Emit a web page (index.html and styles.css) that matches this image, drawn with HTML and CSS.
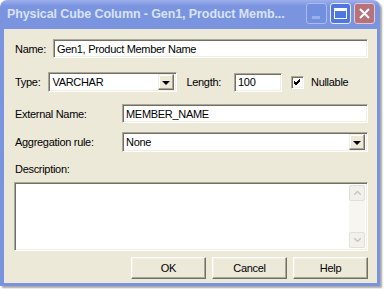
FILE: index.html
```html
<!DOCTYPE html>
<html lang="en">
<head>
    <meta charset="UTF-8">
    <title>Physical Cube Column</title>
    <link rel="stylesheet" href="styles.css">
</head>
<body>

    <!-- Dialog window -->
    <div class="window">
        <div class="titlebar">
            <span class="title">Physical Cube Column - Gen1, Product Memb...</span>
            <div class="caption-btns">
                <div class="cap-btn min"><span class="min-bar"></span></div>
                <div class="cap-btn max"><span class="max-box"></span></div>
                <div class="cap-btn close">
                    <svg width="13" height="13" viewBox="0 0 13 13">
                        <path d="M2 2 L11 11 M11 2 L2 11" stroke="#fff" stroke-width="2"/>
                    </svg>
                </div>
            </div>
        </div>

        <div class="client">
            <div class="row row-name">
                <label class="lbl">Name:</label>
                <div class="field name-field">Gen1, Product Member Name</div>
            </div>

            <div class="row row-type">
                <label class="lbl">Type:</label>
                <div class="field combo type-combo">
                    <span>VARCHAR</span>
                    <div class="drop-btn"><span class="arrow"></span></div>
                </div>
                <label class="lbl length-lbl">Length:</label>
                <div class="field length-field">100</div>
                <div class="check">
                    <svg width="7" height="7" viewBox="0 0 7 7">
                        <path d="M0 2 L2 4 L6 0 M0 3 L2 5 L6 1 M0 4 L2 6 L6 2" stroke="#000" stroke-width="1" fill="none"/>
                    </svg>
                </div>
                <label class="lbl">Nullable</label>
            </div>

            <div class="row row-ext">
                <label class="lbl wide-lbl">External Name:</label>
                <div class="field grow">MEMBER_NAME</div>
            </div>

            <div class="row row-agg">
                <label class="lbl wide-lbl">Aggregation rule:</label>
                <div class="field combo grow">
                    <span>None</span>
                    <div class="drop-btn"><span class="arrow"></span></div>
                </div>
            </div>

            <div class="desc-lbl">Description:</div>
            <div class="field memo">
                <div class="scrollbar">
                    <div class="sb-btn">
                        <svg width="7" height="4" viewBox="0 0 7 4"><path d="M0 4 L3.5 0.5 L7 4" stroke="#c9c7ba" stroke-width="1.4" fill="none"/></svg>
                    </div>
                    <div class="sb-track"></div>
                    <div class="sb-btn">
                        <svg width="7" height="4" viewBox="0 0 7 4"><path d="M0 0 L3.5 3.5 L7 0" stroke="#c9c7ba" stroke-width="1.4" fill="none"/></svg>
                    </div>
                </div>
            </div>

            <div class="buttons">
                <button class="btn">OK</button>
                <button class="btn">Cancel</button>
                <button class="btn">Help</button>
            </div>
        </div>
    </div>

</body>
</html>
```

FILE: styles.css
```css
* {
    margin: 0;
    padding: 0;
    box-sizing: border-box;
}

body {
    background: #ffffff;
    width: 384px;
    height: 289px;
    overflow: hidden;
    font-family: "Liberation Sans", Arial, sans-serif;
    font-size: 11px;
    letter-spacing: -0.3px;
    color: #000;
}

/* Window frame */
.window {
    width: 380px;
    height: 286px;
    background: linear-gradient(#9db0ec, #7b94e0 6px, #7a93df);
    border-radius: 7px 7px 0 0;
    box-shadow: 2px 2px 2px rgba(0, 0, 0, 0.35);
    display: flex;
    flex-direction: column;
}

.titlebar {
    height: 29px;
    display: flex;
    align-items: center;
    justify-content: space-between;
    padding: 0 5px 2px 7px;
}

.title {
    font-weight: bold;
    font-size: 12.5px;
    letter-spacing: -0.1px;
    color: #d8e2f8;
}

.caption-btns {
    display: flex;
    gap: 3px;
}

.cap-btn {
    width: 21px;
    height: 21px;
    border: 1px solid #b9c7f1;
    border-radius: 3px;
    background: #6b87dc;
    display: flex;
    align-items: center;
    justify-content: center;
}

.cap-btn.min {
    background: #7390e0;
    border-color: #a9bbef;
    align-items: flex-end;
    justify-content: flex-start;
    padding: 0 0 4px 5px;
}

.cap-btn.max {
    background: #4e78e0;
    border-color: #e8eefc;
}

.cap-btn.close {
    background: #b6737c;
    border-color: #e4c8d0;
}

.min-bar {
    width: 8px;
    height: 3px;
    background: #9aaee8;
}

.max-box {
    width: 13px;
    height: 11px;
    border: 1px solid #fff;
    border-top-width: 3px;
}

/* Client area */
.client {
    flex: 1;
    margin: 0 3px 3px 4px;
    background: #ece9d8;
    padding: 10px 9px 0 10px;
    display: flex;
    flex-direction: column;
}

.row {
    display: flex;
    align-items: center;
}

.row-name { height: 19px; }
.row-type { height: 20px; margin-top: 14px; }
.row-ext { height: 19px; margin-top: 12px; }
.row-agg { height: 20px; margin-top: 9px; }

.lbl {
    padding-left: 1px;
}

.name-field {
    margin-left: 7px;
    flex: 1;
    height: 19px;
}

.field {
    background: #fff;
    border: 1px solid;
    border-color: #aca899 #fff #fff #aca899;
    box-shadow: inset 1px 1px #716f64, inset -1px -1px #f1efe2;
    padding: 0 3px;
    display: flex;
    align-items: center;
    height: 100%;
}

.grow {
    flex: 1;
}

.wide-lbl {
    width: 108px;
}

.combo {
    padding-right: 2px;
    justify-content: space-between;
}

.type-combo {
    margin-left: 8px;
    width: 129px;
}

.drop-btn {
    width: 16px;
    height: 16px;
    background: #ece9d8;
    border: 1px solid;
    border-color: #f1efe2 #716f64 #716f64 #f1efe2;
    box-shadow: inset -1px -1px #aca899, inset 1px 1px #fff;
    display: flex;
    align-items: center;
    justify-content: center;
}

.arrow {
    width: 0;
    height: 0;
    border-left: 4px solid transparent;
    border-right: 4px solid transparent;
    border-top: 4px solid #000;
    margin-top: 1px;
}

.length-lbl {
    margin-left: 8px;
}

.length-field {
    margin-left: 13px;
    width: 48px;
    height: 19px;
}

.check {
    width: 13px;
    height: 13px;
    margin-left: 9px;
    margin-right: 6px;
    background: #fff;
    border: 1px solid;
    border-color: #aca899 #fff #fff #aca899;
    box-shadow: inset 1px 1px #716f64, inset -1px -1px #f1efe2;
    display: flex;
    align-items: center;
    justify-content: center;
}

.desc-lbl {
    margin-top: 11px;
    padding-left: 1px;
    height: 16px;
}

.memo {
    height: 69px;
    margin-top: 3px;
    justify-content: flex-end;
    align-items: stretch;
    padding: 2px;
}

.scrollbar {
    width: 16px;
    background: #f7f6f1;
    display: flex;
    flex-direction: column;
}

.sb-btn {
    height: 16px;
    border: 1px solid #e2e0d6;
    border-radius: 2px;
    background: #f1f0ea;
    display: flex;
    align-items: center;
    justify-content: center;
}

.sb-track {
    flex: 1;
}

/* Bottom buttons */
.buttons {
    display: flex;
    justify-content: flex-end;
    gap: 6px;
    margin-top: 6px;
}

.btn {
    width: 75px;
    height: 22px;
    font-family: inherit;
    font-size: 11px;
    letter-spacing: -0.3px;
    background: #ece9d8;
    border: 1px solid;
    border-color: #fff #716f64 #716f64 #fff;
    box-shadow: inset -1px -1px #aca899, inset 1px 1px #f1efe2;
    color: #000;
}
```
